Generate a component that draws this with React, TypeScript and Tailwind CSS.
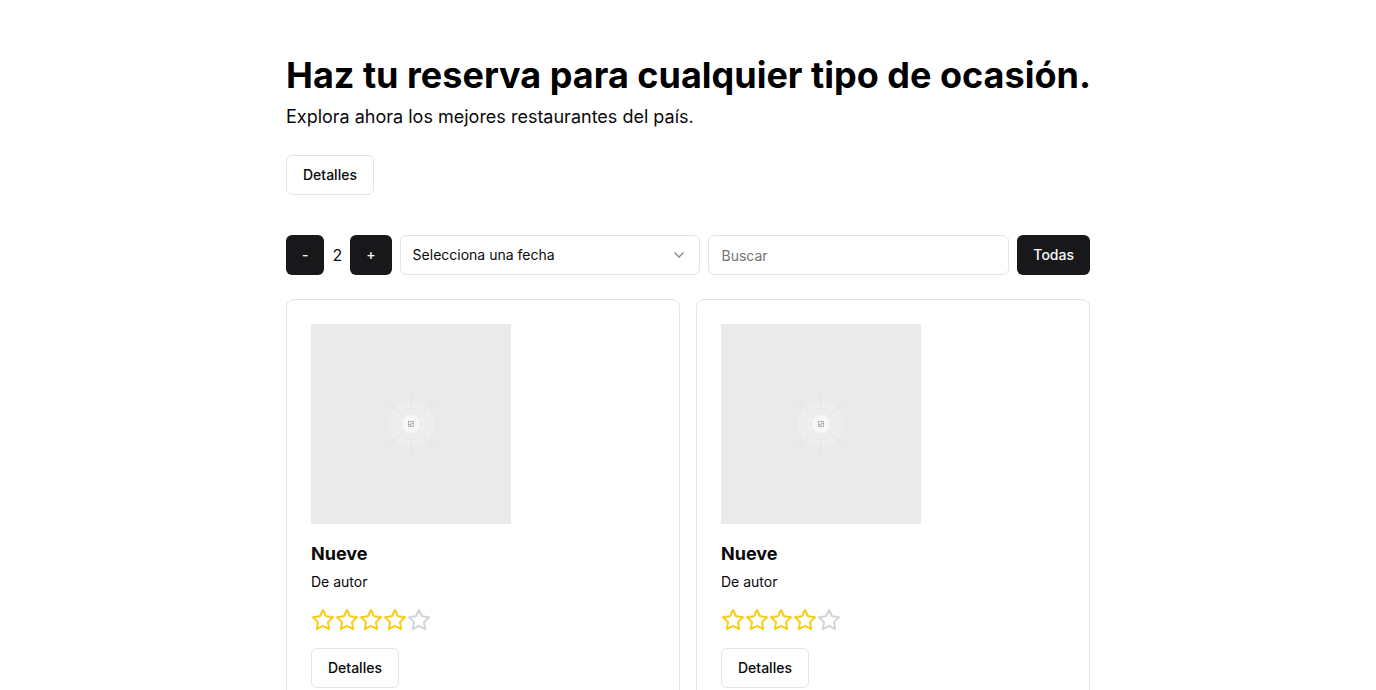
import { useState } from "react";
import { ChevronDown } from "lucide-react";

type Restaurant = { id: number; name: string; cuisine: string; rating: number };

const restaurants: Restaurant[] = [
  { id: 1, name: "Nueve", cuisine: "De autor", rating: 4 },
  { id: 2, name: "Nueve", cuisine: "De autor", rating: 4 },
];

const primaryButton =
  "h-10 shrink-0 rounded-md bg-zinc-900 px-4 py-2 text-sm font-medium text-zinc-50";
const outlineButton =
  "h-10 rounded-md border border-zinc-200 bg-white px-4 py-2 text-sm font-medium text-zinc-950";

function Star({ filled }: { filled: boolean }) {
  return (
    <svg
      viewBox="0 0 24 24"
      fill="none"
      stroke="currentColor"
      strokeWidth="2"
      strokeLinecap="round"
      strokeLinejoin="round"
      className={filled ? "size-6 text-[#facc15]" : "size-6 text-[#d1d5db]"}
      aria-hidden="true"
    >
      <polygon points="12 2 15.09 8.26 22 9.27 17 14.14 18.18 21.02 12 17.77 5.82 21.02 7 14.14 2 9.27 8.91 8.26 12 2" />
    </svg>
  );
}

function Placeholder() {
  return (
    <svg viewBox="0 0 200 200" className="size-50" role="img" aria-label="Imagen del restaurante">
      <rect width="200" height="200" fill="#eaeaea" />
      <circle cx="100" cy="100" r="23" fill="#eeeeee" />
      <g stroke="#e3e3e3" strokeWidth="0.8">
        <path d="M100 68v64M75 100h50" />
        <path d="M77 77l46 46M123 77l-46 46" strokeWidth="1" />
      </g>
      <circle cx="100" cy="100" r="16" fill="none" stroke="#ebebeb" strokeWidth="0.6" />
      <circle cx="100" cy="100" r="9" fill="#f7f7f7" />
      <g fill="none" stroke="#a3a3a3" strokeWidth="0.8">
        <rect x="97.5" y="97.5" width="5" height="5" />
        <path d="M97.5 100.5h2.5v-1h2.5M100 100.5v2" />
      </g>
    </svg>
  );
}

function RestaurantCard({ restaurant }: { restaurant: Restaurant }) {
  return (
    <article className="rounded-lg border border-zinc-200 bg-white p-6 text-zinc-950">
      <Placeholder />
      <h2 className="mt-4 text-lg font-bold">{restaurant.name}</h2>
      <p className="mt-1 text-sm">{restaurant.cuisine}</p>
      <div className="mt-4 flex" role="img" aria-label={`${restaurant.rating} de 5`}>
        {[1, 2, 3, 4, 5].map((n) => (
          <Star key={n} filled={n <= restaurant.rating} />
        ))}
      </div>
      <button type="button" className={`mt-4 ${outlineButton}`}>
        Detalles
      </button>
    </article>
  );
}

export default function App() {
  const [people, setPeople] = useState(2);
  return (
    <main className="flex justify-center bg-white px-4 py-[55px] font-['Inter',sans-serif] text-zinc-950">
      <div className="w-full max-w-[804px]">
        <h1 className="text-4xl font-bold text-black md:whitespace-nowrap">
          Haz tu reserva para cualquier tipo de ocasión.
        </h1>
        <p className="mt-2 text-lg">Explora ahora los mejores restaurantes del país.</p>
        <button type="button" className={`mt-6 ${outlineButton}`}>
          Detalles
        </button>

        <div className="mt-10 flex items-center gap-2">
          <button
            type="button"
            aria-label="Menos personas"
            className={primaryButton}
            onClick={() => setPeople((p) => Math.max(1, p - 1))}
          >
            -
          </button>
          <span>{people}</span>
          <button
            type="button"
            aria-label="Más personas"
            className={primaryButton}
            onClick={() => setPeople((p) => p + 1)}
          >
            +
          </button>
          <div className="relative min-w-0 flex-1">
            <select
              aria-label="Fecha"
              className="h-10 w-full appearance-none rounded-md border border-zinc-200 bg-white px-3 text-sm"
            >
              <option>Selecciona una fecha</option>
            </select>
            <ChevronDown
              className="pointer-events-none absolute top-3 right-[13px] size-4 opacity-50"
              aria-hidden="true"
            />
          </div>
          <div className="min-w-0 flex-1">
            <input
              type="search"
              aria-label="Buscar"
              placeholder="Buscar"
              className="h-10 w-full rounded-md border border-zinc-200 bg-white px-3 py-2 text-sm placeholder:text-[#757575]"
            />
          </div>
          <button type="button" className={primaryButton}>
            Todas
          </button>
        </div>

        <section className="mt-6 grid grid-cols-2 gap-4">
          {restaurants.map((restaurant) => (
            <RestaurantCard key={restaurant.id} restaurant={restaurant} />
          ))}
        </section>
      </div>
    </main>
  );
}
